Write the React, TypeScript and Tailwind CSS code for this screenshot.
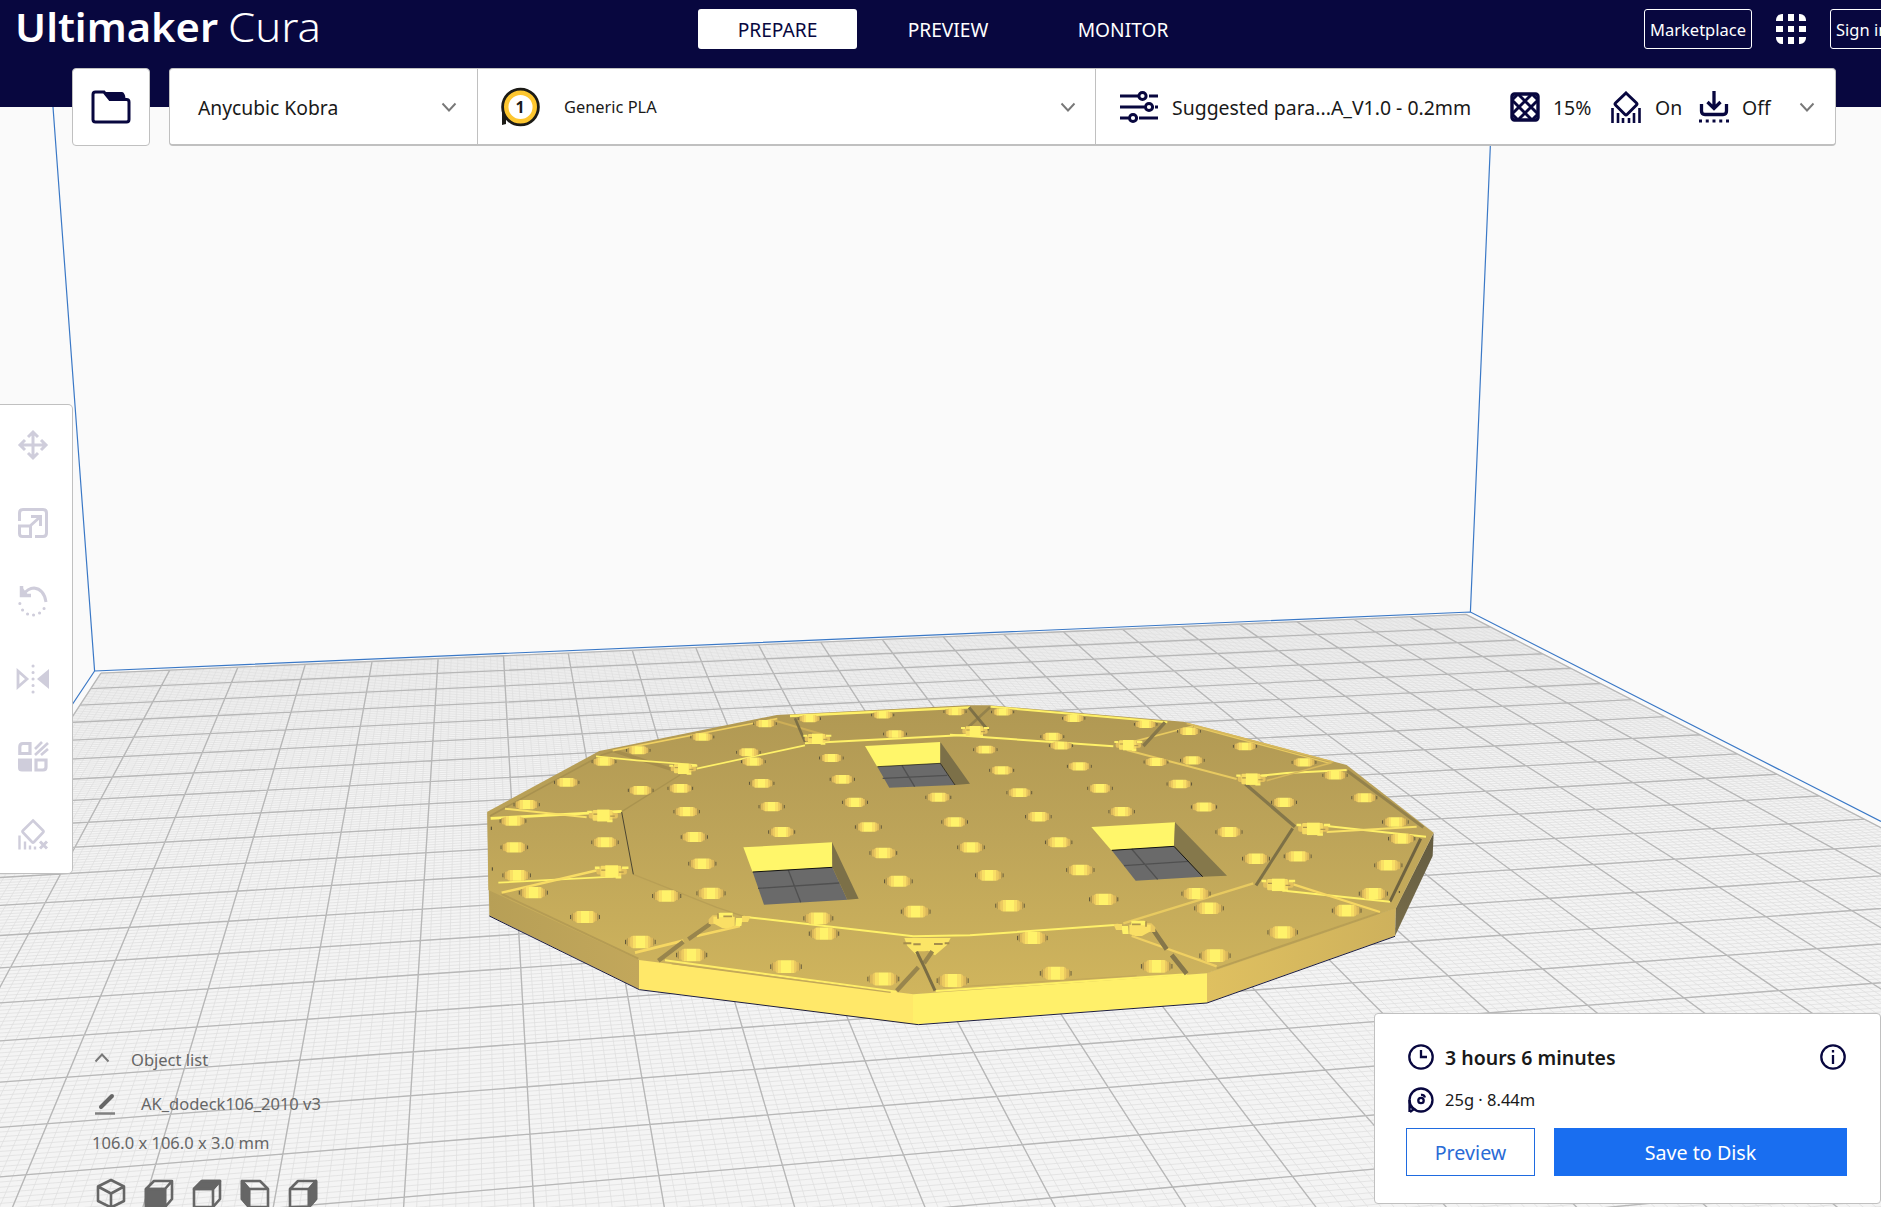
import type { ReactNode } from "react";

/* ---------- build plate perspective ---------- */

type Mat = number[][];

// Samples of where a grid line (by index) crosses the viewport.
// "u" lines run away from the viewer, "v" lines run across the plate.
const U: [number, number, number][] = [
  [0, 101, 673], [1, 169.7, 669.3], [2, 238, 666.7], [3, 305.7, 663.3],
  [2, 91, 1020], [2, 12.3, 1207], [3, 199, 1020], [4, 307, 1020], [4, 273.3, 1207],
  [5, 415.7, 1020], [5, 403.5, 1207], [6, 533.5, 1207], [7, 663.5, 1207],
  [3, 295, 700], [5, 435, 700], [7, 576.8, 700],
  [6, 505, 690], [7, 575.7, 690], [8, 644, 690], [9, 714, 690], [10, 782.7, 690],
  [11, 851.7, 690], [12, 920, 690], [13, 991.7, 690], [14, 1059.3, 690], [15, 1128.3, 690],
  [16, 1197.3, 690], [17, 1265, 690], [18, 1335, 690], [19, 1405, 690],
  [20, 1354.8, 619.3], [21, 1411.9, 616.7], [22, 1881, 828.3],
  [15, 1473.3, 1000], [16, 1580, 1000], [17, 1686, 1000], [18, 1792.7, 1000],
  [13, 1443, 1203], [14, 1573, 1203], [15, 1705, 1204], [16, 1835, 1204],
];
const V: [number, number, number][] = [
  [0, 101, 673], [2, 73, 705], [3, 73, 722.3], [4, 73, 740], [5, 73, 759.3], [6, 73, 779.3],
  [7, 73, 800.7], [8, 73, 823.3], [9, 73, 847.7], [10, 73, 873.3],
  [11, 0, 905], [12, 0, 935.7], [13, 0, 967.3], [14, 0, 1002.7], [15, 0, 1040.7],
  [16, 0, 1082.3], [17, 0, 1127], [18, 0, 1176.7],
  [16, 500, 1045.7], [17, 500, 1089.3], [18, 500, 1136.7], [19, 500, 1189.3],
  [15, 470, 1008], [14, 470, 971], [13, 470, 937.3], [11, 470, 877.3], [9, 470, 825], [7, 470, 780],
  [1, 1300, 635], [2, 1300, 650], [3, 1300, 665], [4, 1300, 681.3], [5, 1300, 698.3],
  [6, 1300, 716.7], [8, 1300, 754],
  [1, 1489, 626.7], [3, 1544.5, 654], [5, 1605.7, 683.7], [7, 1672.4, 716.7], [9, 1741, 753.7],
  [11, 1824.3, 795.7], [13, 1881, 846], [14, 1881, 876], [15, 1881, 908.7], [16, 1881, 944],
  [17, 1881, 983.3], [17, 1360, 1022.7], [18, 1360, 1066.7], [19, 1360, 1116], [20, 1360, 1170],
];

const CX = 900;
const CY = 900;
const SC = 500;

function solve(a: Mat, b: number[]): number[] {
  const n = b.length;
  const m = a.map((r, i) => [...r, b[i]]);
  for (let c = 0; c < n; c++) {
    let p = c;
    for (let r = c + 1; r < n; r++) if (Math.abs(m[r][c]) > Math.abs(m[p][c])) p = r;
    [m[c], m[p]] = [m[p], m[c]];
    for (let r = 0; r < n; r++) {
      if (r === c) continue;
      const f = m[r][c] / m[c][c];
      for (let k = c; k <= n; k++) m[r][k] -= f * m[c][k];
    }
  }
  return m.map((r, i) => r[n] / r[i]);
}

function invert3(m: Mat): Mat {
  const cols = [0, 1, 2].map((i) => solve(m, [0, 1, 2].map((k) => (k === i ? 1 : 0))));
  return [0, 1, 2].map((r) => cols.map((c) => c[r]));
}

function platePlane(): Mat {
  const rows: number[][] = [];
  const rhs: number[] = [];
  const add = (list: [number, number, number][], off: number) =>
    list.forEach(([k, px, py]) => {
      const x = (px - CX) / SC;
      const y = (py - CY) / SC;
      const row = [0, 0, 0, 0, 0, 0, -k * x, -k * y];
      row[off] = x;
      row[off + 1] = y;
      row[off + 2] = 1;
      rows.push(row);
      rhs.push(k);
    });
  add(U, 0);
  add(V, 3);
  const ata = Array.from({ length: 8 }, (_, i) =>
    Array.from({ length: 8 }, (_, j) => rows.reduce((s, r) => s + r[i] * r[j], 0)),
  );
  const atb = Array.from({ length: 8 }, (_, i) => rows.reduce((s, r, k) => s + r[i] * rhs[k], 0));
  const h = solve(ata, atb);
  return invert3([h.slice(0, 3), h.slice(3, 6), [h[6], h[7], 1]]);
}

const H = platePlane();
const at = (u: number, v: number): string => {
  const w = H[2][0] * u + H[2][1] * v + H[2][2];
  const x = ((H[0][0] * u + H[0][1] * v + H[0][2]) / w) * SC + CX;
  const y = ((H[1][0] * u + H[1][1] * v + H[1][2]) / w) * SC + CY;
  return `${x.toFixed(2)} ${y.toFixed(2)}`;
};
const END = 22;
const range = (n: number) => Array.from({ length: n }, (_, i) => i);
const gridPath = (step: number, count: number) =>
  range(count + 1)
    .map((i) => `M${at(i * step, 0)}L${at(i * step, END)}M${at(0, i * step)}L${at(END, i * step)}`)
    .join("");
const MINOR = gridPath(0.1, 220);
const MAJOR = gridPath(1, 22);
const PLATE = `M${at(0, 0)}L${at(END, 0)}L${at(END, END)}L${at(0, END)}Z`;

/* ---------- model ---------- */

const PEGS: [number, number][] = [
  [885, 101], [697, 141], [505, 181], [402, 215], [835, 187], [850, 215], [1018, 86], [1238, 75],
  [1455, 65], [1275, 132], [290, 277], [512, 301], [631, 295], [875, 280], [1084, 204], [1117, 268],
  [1155, 337], [1405, 322], [170, 344], [129, 393], [650, 365], [905, 350], [1195, 411], [1454, 396],
  [133, 472], [405, 457], [673, 441], [935, 426], [1240, 489], [697, 521], [140, 556], [190, 608],
  [590, 618], [723, 610], [1285, 574], [1337, 665], [345, 681], [1045, 685], [1062, 731], [511, 756],
  [665, 795], [948, 830], [1240, 867], [1448, 872],
  [1598, 66], [1811, 85], [2027, 103], [1747, 140], [1773, 167], [1546, 179], [1595, 241], [1828, 229],
  [2157, 124], [2325, 169], [2167, 211], [2058, 216], [2502, 217], [2595, 256], [1648, 308], [1890, 295],
  [2128, 282], [1705, 380], [1955, 365], [2202, 351], [2442, 337], [2683, 323], [2776, 396], [2795, 446],
  [1503, 472], [1766, 457], [2277, 426], [2483, 499], [2358, 506], [2755, 526], [1558, 556], [1831, 540],
  [2178, 611], [2217, 655], [2710, 611], [2630, 662], [1620, 647], [1901, 628], [2438, 727], [1687, 744],
  [2235, 797], [2060, 829], [1757, 850],
];

function Peg({ x, y }: { x: number; y: number }) {
  const w = 31 + (y - 60) * 0.0165;
  const h = 10.5 + (y - 60) * 0.0115;
  return (
    <g>
      <path d={`M${x - w - 2} ${y - h * 0.35}v${h * 0.7}M${x + w + 2} ${y - h * 0.35}v${h * 0.7}`} stroke="#5f5639" strokeWidth={3} />
      <rect x={x - w} y={y - h * 0.72} width={w * 2} height={h * 1.44} rx={h * 0.6} fill="url(#pegSide)" />
      <rect x={x - w * 0.72} y={y - h} width={w * 1.44} height={h * 2} rx={h * 0.5} fill="url(#pegCore)" />
    </g>
  );
}

// [path, colour, width]
const GROOVES: [string, string, number][] = [
  ["M95 612L505 806", "#b59c54", 6],
  ["M60 378L395 195L430 184", "#a8914f", 5],
  ["M2240 835L2730 668", "#b89f55", 6],
  ["M2632 243L2860 412", "#94824c", 9],
  ["M2150 100L2590 216", "#d8b95c", 5],
  ["M2172 110L2580 220", "#e8ca60", 4],
  ["M430 182L610 240", "#a58d4d", 10],
  ["M900 88L1075 138", "#cdae57", 6],
  ["M630 255L455 365", "#aa934f", 4],
  ["M490 553L740 652L830 682", "#b89f55", 4],
  ["M428 182L922 86", "#f0d062", 5],
  ["M960 78L1500 52", "#fff168", 7],
  ["M975 85L1005 155", "#7d7046", 8],
  ["M378 199L500 211L680 225", "#fff168", 5],
  ["M680 236L1005 166", "#fff168", 5],
  ["M1005 160L1500 134", "#fff168", 6],
  ["M62 385L455 364", "#fff168", 8],
  ["M105 356L350 382", "#f8e066", 6],
  ["M455 366L490 553", "#4b4531", 3],
  ["M85 578L430 560", "#fff168", 5],
  ["M95 608L385 540", "#f8dc64", 7],
  ["M495 788L640 752M680 738L810 708", "#f6d762", 8],
  ["M565 812L640 755M655 748L720 702", "#98854d", 13],
  ["M820 680L1330 739L1500 736L1945 704", "#fff168", 6],
  ["M585 811L1280 905", "#ffee68", 6],
  ["M605 821L1262 907", "#c3a859", 4],
  ["M1397 903L2150 853", "#fff168", 6],
  ["M1420 893L2000 857", "#c3a859", 3],
  ["M1560 52L1483 122", "#94824c", 8],
  ["M1497 52L1555 122", "#7d7046", 9],
  ["M1562 50L2092 97", "#fff168", 6],
  ["M1440 134L1930 169", "#fff168", 6],
  ["M1970 180L2300 267", "#e8ca60", 6],
  ["M1990 155L2170 108", "#e8ca60", 5],
  ["M2085 97L2020 168", "#86774a", 10],
  ["M2320 263L2450 249L2630 240", "#fff168", 6],
  ["M2390 272L2585 218", "#d8b95c", 5],
  ["M2326 282L2475 410", "#85774a", 10],
  ["M2468 415L2358 586", "#7d7046", 9],
  ["M2570 408L2868 440", "#fff168", 6],
  ["M2570 426L2840 410", "#f8e066", 6],
  ["M2852 446L2760 635", "#6f6340", 9],
  ["M2450 603L2760 635", "#fff168", 6],
  ["M2470 583L2730 666", "#f6d762", 7],
  ["M2350 580L1960 700", "#e8ca60", 7],
  ["M1985 738L2240 829", "#f0d062", 7],
  ["M2050 720L2090 778M2105 795L2150 851", "#86774a", 14],
];

const CLIPS: [number, number, number][] = [
  [640, 236, 1], [1042, 146, 1], [400, 376, 1.15], [425, 544, 1.2],
  [1515, 123, 1], [1975, 165, 1], [2345, 267, 1.1], [2530, 416, 1.2], [2425, 584, 1.2],
];

function Clip({ x, y, s }: { x: number; y: number; s: number }) {
  return (
    <g transform={`translate(${x} ${y}) scale(${s})`}>
      <rect x={-38} y={-8} width={76} height={16} rx={5} fill="#e3c05d" />
      <rect x={-28} y={-14} width={52} height={28} rx={3} fill="#f6da63" />
      <rect x={-16} y={-15} width={32} height={31} fill="#fff168" />
      <path d="M-42 -12h12v6h-12zM26 -12h16v6H26zM10 12h14v6H10z" fill="#fff168" />
      <path d="M-26 -3h10M18 2h12" stroke="#b0954f" strokeWidth={3} />
    </g>
  );
}

// Corner latch near the front edge; mirrored for the opposite side.
function Latch({ x, y, flip = false }: { x: number; y: number; flip?: boolean }) {
  return (
    <g transform={`translate(${x} ${y}) scale(${flip ? -1 : 1} 1)`}>
      <path d="M-50 -6L-38 -18H-20V-6L0 8L-50 8Z" fill="#e9c760" />
      <path d="M-36 -14H28V14L10 20H-10L-36 6Z" fill="#fadf65" />
      <path d="M-16 -26H22V-12H-22V-24Z" fill="#fff168" />
      <path d="M-6 -15H20M-22 -24V-8" stroke="#b0954f" strokeWidth={5} />
      <path d="M32 -10H52L48 14H30Z" fill="#fff168" />
      <path d="M50 -16H76L68 2H50Z" fill="#f6da63" />
    </g>
  );
}

function Model() {
  return (
    <g transform="translate(470 690) scale(0.333333)">
      <defs>
        <linearGradient id="deck" x1="0" y1="46" x2="0" y2="913" gradientUnits="userSpaceOnUse">
          <stop offset="0" stopColor="#b09853" />
          <stop offset="0.45" stopColor="#bda459" />
          <stop offset="1" stopColor="#d0b55d" />
        </linearGradient>
        <linearGradient id="left" x1="0" y1="0" x2="1" y2="0">
          <stop offset="0" stopColor="#b79f56" />
          <stop offset="1" stopColor="#c2a75b" />
        </linearGradient>
        <linearGradient id="right" x1="0" y1="0" x2="1" y2="0">
          <stop offset="0" stopColor="#dfc060" />
          <stop offset="1" stopColor="#ceb15c" />
        </linearGradient>
        <linearGradient id="shade" x1="0" y1="0" x2="0" y2="1">
          <stop offset="0" stopColor="#625a40" />
          <stop offset="1" stopColor="#796e4a" />
        </linearGradient>
        <linearGradient id="pegSide">
          <stop offset="0.06" stopColor="#b39850" />
          <stop offset="0.06" stopColor="#dcb85b" />
          <stop offset="0.94" stopColor="#dcb85b" />
          <stop offset="0.94" stopColor="#b39850" />
        </linearGradient>
        <linearGradient id="pegCore">
          <stop offset="0.12" stopColor="#ecca60" />
          <stop offset="0.12" stopColor="#f9df65" />
          <stop offset="0.28" stopColor="#f9df65" />
          <stop offset="0.28" stopColor="#fff26a" />
          <stop offset="0.72" stopColor="#fff26a" />
          <stop offset="0.72" stopColor="#f9df65" />
          <stop offset="0.88" stopColor="#f9df65" />
          <stop offset="0.88" stopColor="#ecca60" />
        </linearGradient>
      </defs>
      <path d="M52 365L58 677L507 898L507 810Z" fill="url(#left)" />
      <path d="M507 808L1330 911V1003L507 898Z" fill="#ffe869" />
      <path d="M1329 911L2211 848V938L1345 1003L1329 1002Z" fill="#fff06a" />
      <path d="M2211 848L2778 653L2775 738L2211 938Z" fill="url(#right)" />
      <path d="M2778 653L2891 428L2888 498L2775 738Z" fill="url(#shade)" />
      <path d="M58 678L508 899L1345 1004L2211 939L2775 739" fill="none" stroke="#1b1b3c" strokeWidth={3} />
      <path
        d="M52 365L388 183L920 75L1490 46H1560L2140 95L2630 225L2891 428L2778 655L2211 850L1330 913L507 810L55 600Z"
        fill="url(#deck)"
      />
      {GROOVES.map(([d, c, w], i) => (
        <path key={i} d={d} stroke={c} strokeWidth={w} fill="none" />
      ))}
      {PEGS.map(([x, y], i) => (
        <Peg key={i} x={x} y={y} />
      ))}
      {CLIPS.map(([x, y, s], i) => (
        <Clip key={i} x={x} y={y} s={s} />
      ))}
      <Latch x={766} y={694} />
      <Latch x={2006} y={718} flip />
      <path d="M1303 744H1442L1430 766L1395 796L1372 782L1340 796L1312 768Z" fill="#fbe566" />
      <path d="M1338 784L1388 784L1362 822Z" fill="#c8ad5a" />
      <path d="M1300 760h24M1330 763h22M1392 762h26M1424 760h14" stroke="#a58d4d" strokeWidth={6} />
      <path d="M1280 902L1345 832M1362 820L1387 784" stroke="#98854d" strokeWidth={13} />
      <path d="M1340 785L1362 830L1395 902" stroke="#7a6d44" strokeWidth={9} fill="none" />
      <path d="M64 410v10M67 532v10M2788 603v6" stroke="#4b4531" strokeWidth={3} />

      <path d="M1185 168L1411 156V221L1222 231Z" fill="#fff66a" />
      <path d="M1222 230L1411 220L1455 285L1258 293Z" fill="#6a6a6a" />
      <path d="M1411 156L1500 281L1455 285L1411 220Z" fill="#7c7048" />
      <path d="M1238 265L1432 256M1296 227L1334 290" stroke="#505050" strokeWidth={4} />
      <path d="M1222 230L1411 220L1455 285" stroke="#111" strokeWidth={2} fill="none" />

      <path d="M820 472L1086 457L1087 533L848 547Z" fill="#fff66a" />
      <path d="M848 546L1087 532L1132 629L882 644Z" fill="#6a6a6a" />
      <path d="M1086 457L1166 626L1132 629L1087 532Z" fill="#7c7048" />
      <path d="M864 595L1108 579M955 541L992 637" stroke="#505050" strokeWidth={4} />
      <path d="M848 546L1087 532" stroke="#111" strokeWidth={3} />

      <path d="M1864 411L2115 397L2112 470L1925 482Z" fill="#fff66a" />
      <path d="M1925 481L2112 469L2198 560L1997 572Z" fill="#6a6a6a" />
      <path d="M2115 397L2271 557L2198 560L2112 469Z" fill="#85784b" />
      <path d="M1962 527L2155 514M1985 477L2063 568" stroke="#505050" strokeWidth={4} />
      <path d="M1925 481L2112 469L2198 560" stroke="#111" strokeWidth={3} fill="none" />
    </g>
  );
}

function Scene() {
  return (
    <svg className="absolute inset-0" width="1881" height="1207" viewBox="0 0 1881 1207">
      <path d={PLATE} fill="#f4f4f4" />
      <path d={MINOR} stroke="#dfdfdf" strokeWidth={0.75} fill="none" />
      <path d={MAJOR} stroke="#b7b7b7" strokeWidth={1.35} fill="none" />
      <g stroke="#3a78c6" strokeWidth={1.2} fill="none">
        <path d="M53 107L94.6 671M1492 107L1470.4 612" />
        <path d="M0 813L94.6 671L1470.4 612L1881 821.5" />
      </g>
      <Model />
    </svg>
  );
}

/* ---------- icons ---------- */

type IconProps = { size?: number; className?: string; children: ReactNode; box?: number };
function Icon({ size = 30, box = 30, className = "", children }: IconProps) {
  return (
    <svg
      width={size}
      height={size}
      viewBox={`0 0 ${box} ${box}`}
      fill="none"
      stroke="currentColor"
      strokeWidth={3}
      className={`block shrink-0 ${className}`}
    >
      {children}
    </svg>
  );
}

function Chevron({ up = false, className = "" }: { up?: boolean; className?: string }) {
  return (
    <svg width="16" height="10" viewBox="0 0 16 10" fill="none" stroke="#787878" strokeWidth={1.9} className={`shrink-0 ${className}`}>
      <path d={up ? "M1.5 8.5L8 1.5L14.5 8.5" : "M1.5 1.5L8 8.5L14.5 1.5"} />
    </svg>
  );
}

function FolderIcon() {
  return (
    <svg width="40" height="34" viewBox="0 0 40 34" className="text-[#08073f]">
      <path d="M2 30V4.500Q2 2 4.500 2H13L19 9.500H35.500Q38 9.500 38 12V29.500Q38 32 35.500 32H4.500Q2 32 2 29.500Z" fill="#fff" stroke="currentColor" strokeWidth={3} />
      <path d="M12 2H31Q34 2.500 34.500 8.500L38 10H19Z" fill="currentColor" />
    </svg>
  );
}

function MaterialIcon() {
  return (
    <svg width="40" height="40" viewBox="0 0 40 40">
      <path d="M2 20V38L6 37V31L11 34L6 20Z" fill="#1c1b16" />
      <circle cx="20.500" cy="20" r="14.800" fill="#fff" stroke="#fdc62f" strokeWidth={5.500} />
      <circle cx="20.500" cy="20" r="17.900" fill="none" stroke="#1c1b16" strokeWidth={2.800} />
    </svg>
  );
}

function SlidersIcon() {
  return (
    <svg width="40" height="34" viewBox="0 0 40 34" fill="none" stroke="#08073f" strokeWidth={3}>
      <path d="M1 6H19M30 6H39M1 17H25M36 17H39M1 28H9M20 28H39" />
      <circle cx="23.500" cy="6" r="3.600" />
      <circle cx="30" cy="17" r="3.600" />
      <circle cx="14" cy="28" r="3.600" />
    </svg>
  );
}

function InfillIcon() {
  return (
    <Icon className="text-[#08073f]">
      <rect x="2" y="2" width="26" height="26" rx="2.500" strokeWidth={3.400} />
      <path d="M2 8L8 2M2 22L22 2M8 28L28 8M22 28L28 22M2 22L8 28M2 8L22 28M8 2L28 22M22 2L28 8" strokeWidth={3} />
    </Icon>
  );
}

function SupportIcon() {
  return (
    <Icon size={32} box={32} className="text-[#08073f]">
      <path d="M16 2L26.500 12Q27.500 13 26.500 14L17 23.500Q16 24.500 15 23.500L5.500 14Q4.500 13 5.500 12Z" />
      <path d="M2.500 17V32M8 22V32M13 27V32M19 27V32M24 22V32M29.500 17V32" strokeWidth={2.600} />
    </Icon>
  );
}

function AdhesionIcon() {
  return (
    <Icon size={32} box={32} className="text-[#08073f]">
      <path d="M16 0V17M9.500 11L16 17.500L22.500 11" strokeWidth={3.300} />
      <path d="M3.500 13V20Q3.500 23.500 7 23.500H25Q28.500 23.500 28.500 20V13" strokeWidth={3.300} />
      <path d="M1 30H31" strokeDasharray="3 3.750" />
    </Icon>
  );
}

function CubeIcon({ kind }: { kind: number }) {
  return (
    <svg width="30" height="30" viewBox="0 0 30 30" fill="none" stroke="#666" strokeWidth={2.600} strokeLinejoin="round" className="block shrink-0">
      {kind === 0 && <path d="M15 2L28 8.500V23L15 29.500L2 23V8.500ZM2 8.500L15 15.500L28 8.500M15 15.500V29" />}
      {kind === 1 && (
        <>
          <path d="M2 11L10 3H28V21L21 29H2ZM2 11H21V29M21 11L28 3" />
          <path d="M2 11H21V29H2Z" fill="#666" />
        </>
      )}
      {kind === 2 && (
        <>
          <path d="M2 11L10 3H28V21L21 29H2ZM2 11H21V29M21 11L28 3" />
          <path d="M2 11L10 3H28L21 11Z" fill="#666" />
        </>
      )}
      {kind === 3 && (
        <>
          <path d="M28 11L20 3H2V21L9 29H28ZM28 11H9V29M9 11L2 3" />
          <path d="M2 3L9 11V29L2 21Z" fill="#666" />
        </>
      )}
      {kind === 4 && (
        <>
          <path d="M2 11L10 3H28V21L21 29H2ZM2 11H21V29M21 11L28 3" />
          <path d="M21 11L28 3V21L21 29Z" fill="#666" />
        </>
      )}
    </svg>
  );
}

const TOOLS: ReactNode[] = [
  <>
    <path d="M15 3V27M3 15H27M10 7L15 2L20 7M10 23L15 28L20 23M7 10L2 15L7 20M23 10L28 15L23 20" />
  </>,
  <>
    <path d="M1.500 13V5Q1.500 1.500 5 1.500H25Q28.500 1.500 28.500 5V25Q28.500 28.500 25 28.500H17" />
    <path d="M1.500 18H12.500V28.500H4.500Q1.500 28.500 1.500 25.500ZM12 18L22 9M13 8.500H22.500V18" />
  </>,
  <>
    <path d="M5 9Q10 2 16 2Q26 3 28 16" />
    <path d="M3.500 0V9.500H13" strokeWidth={3.500} />
    <path d="M4 1V10H11Z" fill="currentColor" stroke="none" />
    <path d="M1.800 17.500h.1M4.500 24h.1M9.500 28h.1M15.500 29h.1M21.500 27h.1M26 22.500h.1" strokeLinecap="round" />
  </>,
  <>
    <path d="M0 7L9 15L0 23Z" strokeWidth={2.800} />
    <path d="M31 5V25L19 15Z" fill="currentColor" stroke="none" />
    <path d="M15 2h.1M15 8.500h.1M15 15h.1M15 21.500h.1M15 28h.1" strokeLinecap="round" />
  </>,
  <>
    <path d="M12 1.500V11.500H1.800V5Q1.800 1.500 5 1.500ZM18 18H28V25Q28 28 25 28H18Z" strokeWidth={3.200} />
    <path d="M0 16.500H14V29.500H4Q0 29.500 0 26Z" fill="currentColor" stroke="none" />
    <path d="M17 7L24 0M17 13L30 1M23 13L30 7" strokeWidth={2.700} />
  </>,
  <>
    <path d="M15 .500L25 10.500Q26 11.500 25 12.500L16 22Q15 23 14 22L5 12.500Q4 11.500 5 10.500Z" strokeWidth={2.600} />
    <path d="M1.500 15.500V29.500M7 21.500V29.500M12 25.500V29.500M17 26.500V29.500" strokeWidth={2.400} />
    <path d="M22 21.500L29 28.500M29 21.500L22 28.500" />
  </>,
];

/* ---------- page ---------- */

export default function App() {
  return (
    <div
      className="relative flex h-[1207px] w-[1881px] flex-col overflow-hidden bg-[#fafafa] text-[19.200px] leading-none text-[#191919]"
      style={{ fontFamily: '"Noto Sans", "Open Sans", sans-serif' }}
    >
      <Scene />

      <header className="relative h-[107px] shrink-0 bg-[#08073f] text-white">
        <div className="flex h-[68px] items-start">
          <svg width="330" height="56" className="mr-[368px] shrink-0" fill="#fff" fontSize="40">
            <text x="15" y="42" fontWeight="600" textLength="203" lengthAdjust="spacingAndGlyphs">Ultimaker</text>
            <text x="228" y="42" fontWeight="300" textLength="93" lengthAdjust="spacingAndGlyphs">Cura</text>
          </svg>
          <nav className="mt-[9px] flex h-10 items-center text-center">
            <span className="flex h-10 w-[159px] items-center justify-center rounded-[3px] bg-white pt-[2px] text-[#08073f]">PREPARE</span>
            <span className="ml-[11px] w-[160px] pt-[2px]">PREVIEW</span>
            <span className="ml-[14px] w-[162px] pt-[2px]">MONITOR</span>
          </nav>
          <div className="ml-auto mt-[9px] flex h-10 shrink-0 items-center text-[16.500px]">
            <span className="flex h-10 w-[108px] items-center justify-center rounded-[3px] border-[1.500px] border-white pt-[2px]">Marketplace</span>
            <div className="ml-6 grid size-[30px] grid-cols-3 gap-[5px] overflow-hidden rounded-[6px]">
              {range(9).map((i) => (
                <span key={i} className="bg-white" />
              ))}
            </div>
            <span className="ml-6 mr-[-14px] flex h-10 w-[65px] items-center whitespace-nowrap rounded-[3px] border-[1.500px] border-white pl-[5px] pt-[2px]">Sign in</span>
          </div>
        </div>

        <div className="flex h-[78px] pl-[72px] text-[#191919]">
          <button className="flex w-[78px] items-center justify-center rounded-[4px] border border-[#c0c0c0] bg-white">
            <FolderIcon />
          </button>
          <div className="ml-[19px] flex w-[1667px] items-center rounded-[4px] border border-b-2 border-[#c0c0c0] bg-white">
            <div className="flex h-full w-[308px] items-center border-r border-[#c0c0c0] pl-[28px] pr-5">
              <span className="pt-[2px] text-[19.300px]">Anycubic Kobra</span>
              <Chevron className="ml-auto" />
            </div>
            <div className="flex h-full w-[618px] items-center border-r border-[#c0c0c0] pl-[22px] pr-[19px]">
              <div className="relative">
                <MaterialIcon />
                <span className="absolute inset-0 flex items-center justify-center text-[16px] font-bold">1</span>
              </div>
              <span className="ml-[24px] pt-[1px] text-[16.400px]">Generic PLA</span>
              <Chevron className="ml-auto" />
            </div>
            <div className="flex h-full flex-1 items-center pl-[23px] pr-5 text-[19.450px]">
              <SlidersIcon />
              <span className="ml-[13px] w-[338px] whitespace-nowrap pt-[2px]">Suggested para...A_V1.0 - 0.2mm</span>
              <InfillIcon />
              <span className="ml-[13px] w-[57px] pt-[2px]">15%</span>
              <SupportIcon />
              <span className="ml-[13px] w-[43px] pt-[2px]">On</span>
              <AdhesionIcon />
              <span className="ml-[12px] pt-[2px]">Off</span>
              <Chevron className="ml-auto" />
            </div>
          </div>
        </div>
      </header>

      <aside className="relative mt-[297px] flex h-[470px] w-[73px] shrink-0 flex-col gap-[48px] rounded-r-[5px] border border-l-0 border-[#c0c0c0] bg-white pl-[18px] pt-[25px] text-[#cfcddb]">
        {TOOLS.map((t, i) => (
          <Icon key={i} className="overflow-visible">{t}</Icon>
        ))}
      </aside>

      <div className="relative flex h-[333px] shrink-0 justify-between">
        <div className="pl-[92px] pt-[176px] text-[16.500px] text-[#666]">
          <div className="flex h-5 items-center pl-[2px]">
            <Chevron up className="-mt-1" />
            <span className="ml-[21px]">Object list</span>
          </div>
          <div className="mt-6 flex h-5 items-center pl-[2px]">
            <svg width="22" height="22" viewBox="0 0 22 22" stroke="#666">
              <path d="M7 14L18 3" strokeWidth={4} strokeLinecap="round" />
              <path d="M1 20.500H21" strokeWidth={2.500} stroke="#808080" />
            </svg>
            <span className="ml-[25px]">AK_dodeck106_2010 v3</span>
          </div>
          <div className="mt-[19px] h-5 leading-5">106.0 x 106.0 x 3.0 mm</div>
          <div className="mt-[25px] flex gap-[18px] pl-1">
            {range(5).map((k) => (
              <CubeIcon key={k} kind={k} />
            ))}
          </div>
        </div>

        <section className="mb-[3px] flex h-[191px] w-[507px] flex-col self-end rounded-[4px] border border-[#c0c0c0] bg-white pl-[31px] pr-8 pt-[29px]">
          <div className="flex h-7 items-center text-[#08073f]">
            <Icon size={26} box={26} className="ml-[2px]">
              <circle cx="13" cy="13" r="11.700" strokeWidth={2.300} />
              <path d="M13 6V13H19" strokeWidth={2.300} />
            </Icon>
            <span className="ml-[11px] pt-[1px] text-[19.500px] font-semibold text-[#191919]">3 hours 6 minutes</span>
            <Icon size={26} box={26} className="ml-auto mr-[2px]">
              <circle cx="13" cy="13" r="11.700" strokeWidth={2.300} />
              <path d="M13 11V20M13 6V8.500" strokeWidth={2.300} />
            </Icon>
          </div>
          <div className="mt-[15px] flex h-7 items-center text-[#08073f]">
            <Icon size={26} box={26} className="ml-[2px]">
              <circle cx="13" cy="13" r="11.500" strokeWidth={2.300} />
              <circle cx="13" cy="13.500" r="2.700" strokeWidth={2.300} />
              <path d="M1.500 13V25M2 19L6 22L2 25" strokeWidth={2.300} />
              <path d="M13 8Q16 7.500 17 10.500" strokeWidth={2.300} />
            </Icon>
            <span className="ml-[11px] text-[16.500px] text-[#191919]">25g · 8.44m</span>
          </div>
          <div className="mt-[14px] flex h-12 text-[19.700px]">
            <button className="w-[129px] border-[1.500px] border-[#1f6be0] pt-[1px] text-[#2a6bd6]">Preview</button>
            <button className="ml-[19px] w-[293px] bg-[#196ef0] pt-[1px] text-white">Save to Disk</button>
          </div>
        </section>
      </div>
    </div>
  );
}
